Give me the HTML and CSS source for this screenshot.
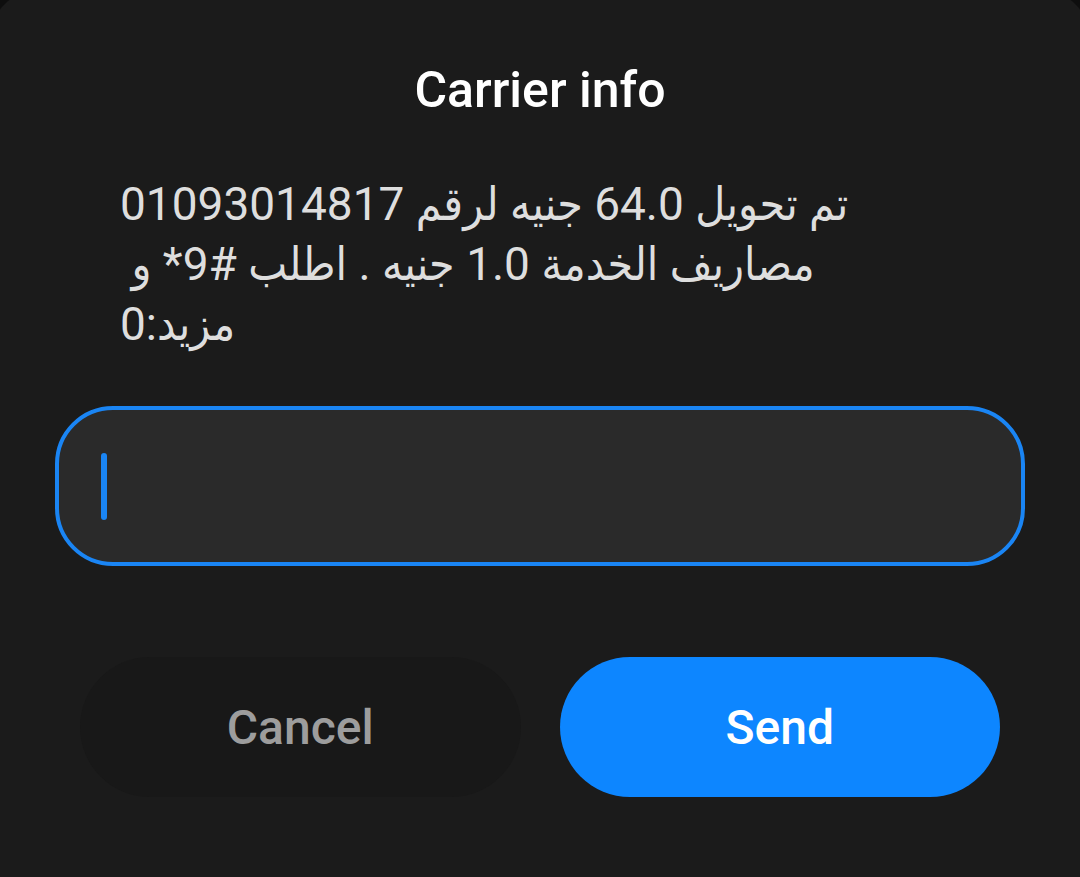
FILE: index.html
```html
<!DOCTYPE html>
<html lang="ar">
<head>
<meta charset="utf-8">
<title>Carrier info</title>
<link rel="stylesheet" href="styles.css">
</head>
<body>
<div class="dialog">
  <h1 class="title">Carrier info</h1>
  <p class="message" dir="rtl">تم تحويل 64.0 جنيه لرقم 01093014817<br>مصاريف الخدمة 1.0 جنيه . اطلب #9* و&nbsp;<br>مزيد:0</p>
  <div class="field"><span class="cursor"></span></div>
  <div class="actions">
    <button class="btn btn-cancel">Cancel</button>
    <button class="btn btn-send">Send</button>
  </div>
</div>
</body>
</html>
```
FILE: styles.css
```css
html, body {
  margin: 0;
  padding: 0;
  background: #0e0e0e;
  height: 100%;
  overflow: hidden;
}
.dialog {
  margin: -12px -12px 0;
  padding: 73px 12px 0;
  height: 900px;
  background: #1b1b1b;
  border-radius: 56px 56px 0 0;
  font-family: Roboto, "DejaVu Sans Condensed", "DejaVu Sans", sans-serif;
  box-sizing: border-box;
}
.title {
  margin: 0;
  font-size: 50px;
  line-height: 58px;
  font-weight: 500;
  color: #ffffff;
  text-align: center;
}
.message {
  margin: 55px 0 0;
  padding: 0 120px;
  font-size: 46px;
  line-height: 60px;
  color: #dedede;
  text-align: left;
}
.field {
  margin: 52px 55px 0;
  height: 160px;
  box-sizing: border-box;
  border: 4px solid #1a85f4;
  border-radius: 58px;
  background: #2a2a2a;
  display: flex;
  align-items: center;
  padding-left: 42px;
}
.cursor {
  display: block;
  width: 6px;
  height: 67px;
  border-radius: 3px;
  background: #1a85f4;
}
.actions {
  margin: 91px 80px 0;
  display: flex;
  gap: 39px;
}
.btn {
  flex: 1;
  height: 140px;
  border: none;
  border-radius: 70px;
  font-family: Roboto, sans-serif;
  font-size: 48px;
  font-weight: 500;
  padding: 0;
}
.btn-cancel {
  background: #181818;
  color: #9d9d9d;
}
.btn-send {
  background: #0d86ff;
  color: #ffffff;
}
```
